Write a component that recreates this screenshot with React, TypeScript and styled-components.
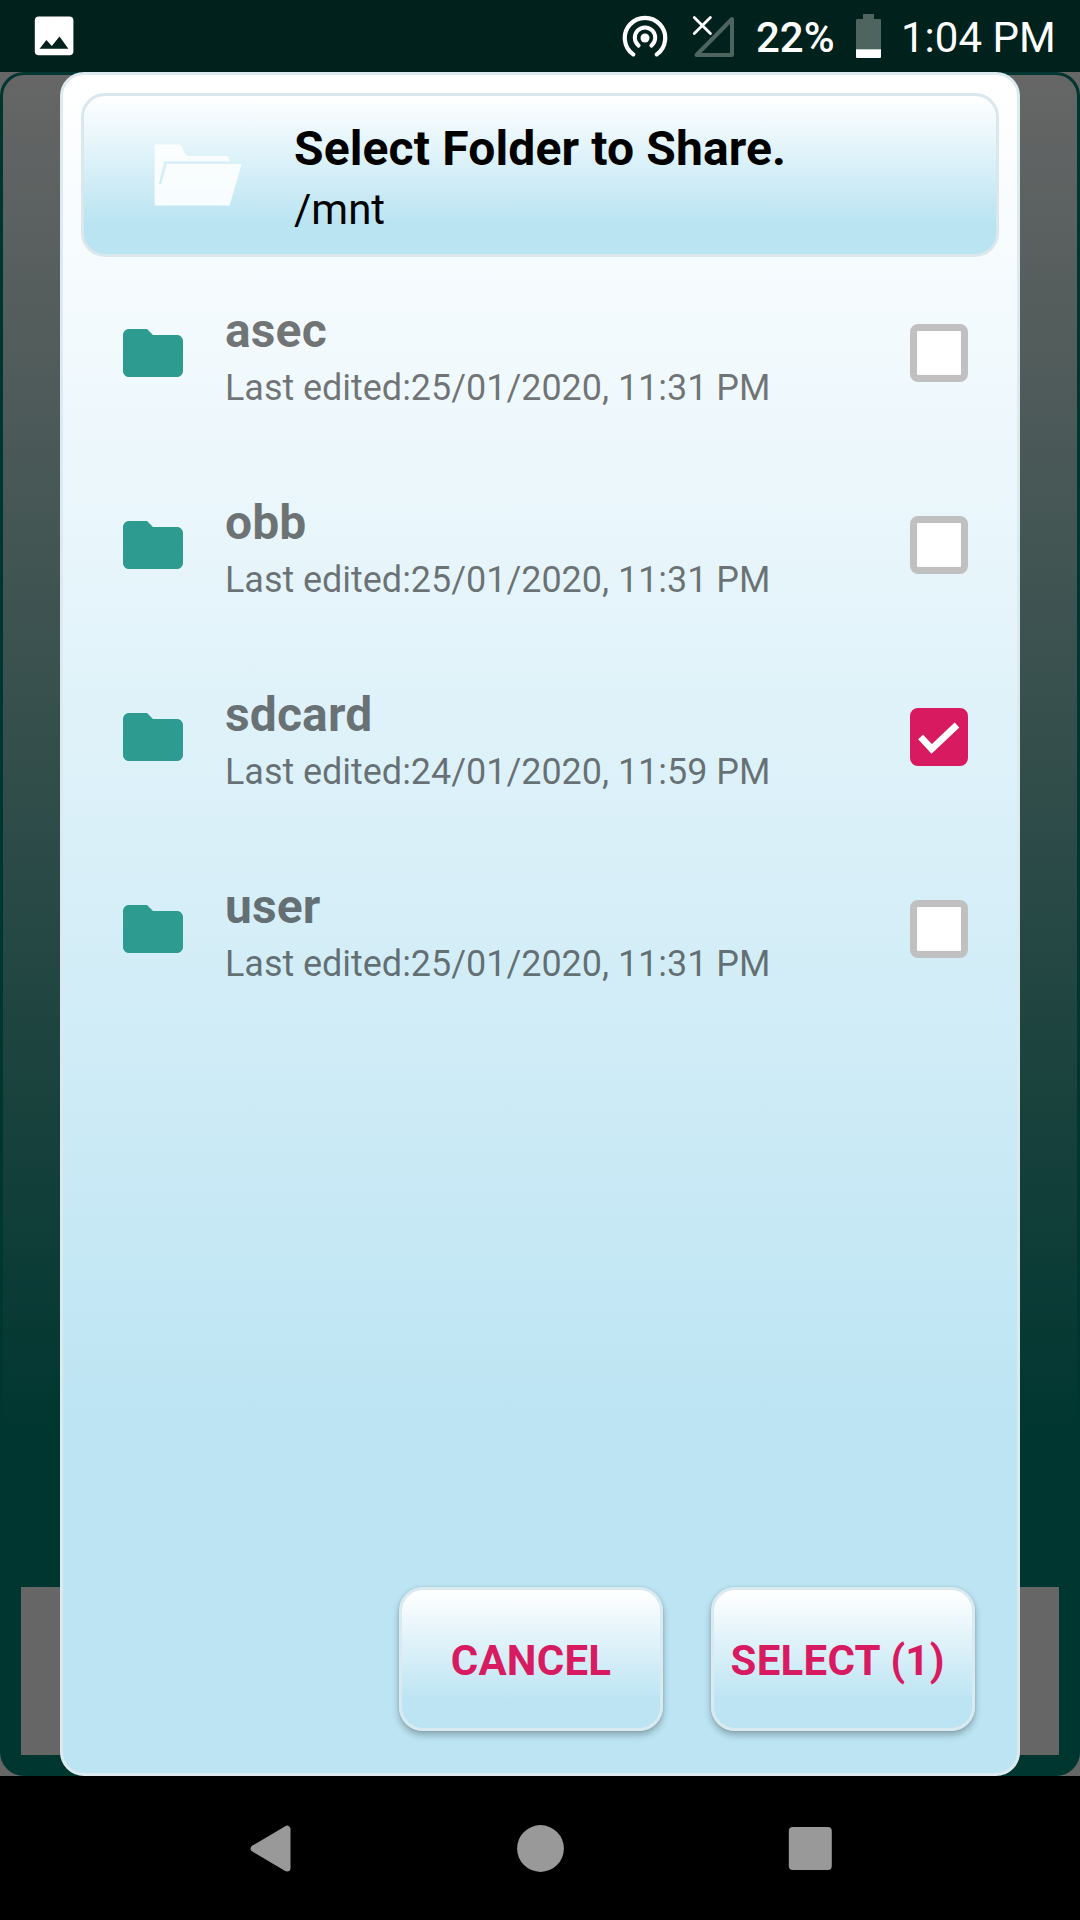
import React, { useState } from "react";
import styled, { createGlobalStyle } from "styled-components";

const GlobalStyle = createGlobalStyle`
  * { box-sizing: border-box; }
  body { margin: 0; background: #000; }
  button { font: inherit; }
`;

const Device = styled.div`
  width: 1080px;
  height: 1920px;
  display: flex;
  flex-direction: column;
  overflow: hidden;
  font-family: Roboto, "Noto Sans", sans-serif;
`;

const StatusBar = styled.header`
  height: 72px;
  flex: none;
  display: flex;
  align-items: center;
  padding: 0 24px 0 33px;
  background: #00211c;
  color: #fff;
  font-size: 42px;
  line-height: 72px;
  white-space: nowrap;

  svg { display: block; flex: none; }
`;

const StatusIcons = styled.div`
  margin-left: auto;
  display: flex;
  align-items: center;
`;

const Battery = styled.span`
  width: 77px;
  margin: 4px 23px 0 20px;
  font-weight: 500;
`;

const Clock = styled.span`
  width: 155px;
  margin: 4px 0 0 19px;
`;

const Stage = styled.main`
  height: 1704px;
  flex: none;
  display: grid;
  grid-template: 100% / 100%;
  background: #666;
`;

const Backdrop = styled.div`
  grid-area: 1 / 1;
  display: flex;
  flex-direction: column;
  justify-content: flex-end;
  padding: 18px;
  border: 3px solid #003630;
  border-radius: 24px;
  background: linear-gradient(#666 0%, #003630 80%);
`;

const BackdropFooter = styled.div`
  height: 168px;
  background: #666;
`;

const Dialog = styled.section`
  grid-area: 1 / 1;
  margin: 0 60px;
  padding: 18px;
  display: flex;
  flex-direction: column;
  border: 3px solid #dceaef;
  border-radius: 24px;
  background: linear-gradient(#fff 0%, #bce4f3 80%);
`;

const DialogHeader = styled.div`
  height: 164px;
  flex: none;
  display: flex;
  align-items: flex-start;
  border: 3px solid #dae8ee;
  border-radius: 24px;
  background: linear-gradient(#fff 0%, #bae4f2 80%);
  color: #000;

  svg { margin: 48px 52px 0 70px; flex: none; }
`;

const HeaderText = styled.div`
  padding-top: 25px;
`;

const Heading = styled.h1`
  margin: 0;
  font-size: 48px;
  line-height: 56px;
  font-weight: 700;
  letter-spacing: 0.13px;
`;

const Path = styled.div`
  margin-top: 8px;
  font-size: 42px;
  line-height: 49px;
`;

const List = styled.ul`
  flex: 1;
  margin: 0;
  padding: 0;
  list-style: none;
`;

const Row = styled.li`
  height: 192px;
  display: flex;
  align-items: center;
  padding: 0 31px 0 36px;
`;

const RowText = styled.div`
  flex: 1;
  margin: 0 0 0 36px;
  padding-top: 5px;
  color: rgba(0, 0, 0, 0.54);
`;

const Name = styled.div`
  font-size: 48px;
  line-height: 56px;
  font-weight: 700;
  letter-spacing: 0.13px;
`;

const Edited = styled.div`
  margin-top: 8px;
  font-size: 36px;
  line-height: 42px;
  letter-spacing: -0.04px;
`;

const Check = styled.button<{ $on: boolean }>`
  width: 58px;
  height: 58px;
  flex: none;
  display: grid;
  place-items: center;
  padding: 0;
  border: 7px solid ${(p) => (p.$on ? "#d81b60" : "#c0c0c0")};
  border-radius: 8px;
  background: ${(p) => (p.$on ? "#d81b60" : "#fff")};

  svg { display: block; overflow: visible; }
`;

const Actions = styled.footer`
  display: flex;
  justify-content: flex-end;
  gap: 48px;
  padding: 0 24px 24px 0;
`;

const ActionButton = styled.button`
  width: 264px;
  height: 144px;
  padding: 2px 0 0;
  border: 3px solid #d9eaf1;
  border-radius: 24px;
  background: linear-gradient(#fff 0%, #bce4f3 80%);
  box-shadow: 0 4px 7px rgba(0, 0, 0, 0.28), 0 0 3px rgba(0, 0, 0, 0.1);
  color: #d81b60;
  font-size: 42px;
  font-weight: 700;
  letter-spacing: 0.25px;
  white-space: pre;
`;

const NavBar = styled.nav`
  height: 144px;
  flex: none;
  display: flex;
  justify-content: center;
  align-items: center;
  gap: 224px;
  padding-left: 2px;
  background: #000;
`;

const GalleryIcon = () => (
  <svg width="42" height="42" viewBox="33 15 42 42">
    <rect x="34.8" y="16.6" width="38.6" height="38.6" rx="4" fill="#fff" />
    <path d="M39.6 48.8 L46.4 40 L51.8 46 L59.5 36.4 L68.4 48.8 Z" fill="#00211c" />
  </svg>
);

const HotspotIcon = () => (
  <svg width="46" height="46" viewBox="622 13 46 46" fill="none" stroke="#fff" strokeLinecap="round">
    <circle cx="645" cy="38" r="4.5" fill="#fff" stroke="none" />
    <path d="M638.6 45.6 A10.2 10.2 0 1 1 651.4 45.6" strokeWidth="4" />
    <path d="M633.2 54.4 A20.2 20.2 0 1 1 656.8 54.4" strokeWidth="4.2" />
  </svg>
);

const NoSignalIcon = () => (
  <svg width="44" height="46" viewBox="692 13 44 46" fill="none">
    <path d="M732 19 V55 H696.5 Z" stroke="#4d645f" strokeWidth="4" strokeLinejoin="round" />
    <path d="M694.3 17.6 L710.4 33.4 M710.4 17.6 L694.3 33.4" stroke="#fff" strokeWidth="2.8" strokeLinecap="round" />
  </svg>
);

const BatteryIcon = () => (
  <svg width="26" height="46" viewBox="856 13 26 46">
    <path d="M863 14 H874 V19 H880 Q881 19 881 20 V49.3 H856 V20 Q856 19 857 19 H863 Z" fill="#4d645f" />
    <path d="M856 49.3 H881 V57 Q881 58 880 58 H857 Q856 58 856 57 Z" fill="#fff" />
  </svg>
);

const OpenFolderIcon = () => (
  <svg width="88" height="62" viewBox="154 144 88 62">
    <path
      d="M154.6 144.6 H178 Q181.5 144.6 182.6 148.5 Q185 156 189 156 H226.5 Q229 156 229.6 161.2 H164 L159 184 H161 L167 164 H241.6 L229.6 205.4 H154.6 Z"
      fill="#fff"
      fillOpacity="0.86"
    />
  </svg>
);

const FolderIcon = () => (
  <svg width="72" height="72" viewBox="0 0 24 24">
    <path
      d="M10 4H4c-1.1 0-1.99.9-1.99 2L2 18c0 1.1.9 2 2 2h16c1.1 0 2-.9 2-2V8c0-1.1-.9-2-2-2h-8l-2-2z"
      fill="#2d9b90"
    />
  </svg>
);

const TickIcon = () => (
  <svg width="44" height="44" viewBox="917 715 44 44">
    <path d="M920.6 737 L931.7 748.9 L957 725" fill="none" stroke="#fff" strokeWidth="6.8" />
  </svg>
);

const BackIcon = () => (
  <svg width="42" height="48" viewBox="250 1824 42 48">
    <path
      d="M287 1829.2 V1868 L254.2 1848.6 Z"
      fill="#999"
      stroke="#999"
      strokeWidth="7"
      strokeLinejoin="round"
    />
  </svg>
);

const HomeIcon = () => (
  <svg width="48" height="48" viewBox="0 0 48 48">
    <circle cx="24.5" cy="24.5" r="23.4" fill="#999" />
  </svg>
);

const RecentsIcon = () => (
  <svg width="44" height="44" viewBox="0 0 44 44">
    <rect x="0.8" y="1" width="43" height="43" rx="4" fill="#999" />
  </svg>
);

const folders = [
  { name: "asec", edited: "25/01/2020, 11:31 PM" },
  { name: "obb", edited: "25/01/2020, 11:31 PM" },
  { name: "sdcard", edited: "24/01/2020, 11:59 PM" },
  { name: "user", edited: "25/01/2020, 11:31 PM" },
];

export default function App() {
  const [selected, setSelected] = useState<string[]>(["sdcard"]);
  const toggle = (name: string) =>
    setSelected((s) => (s.includes(name) ? s.filter((n) => n !== name) : [...s, name]));

  return (
    <Device>
      <GlobalStyle />
      <StatusBar>
        <GalleryIcon />
        <StatusIcons>
          <HotspotIcon />
          <svg width="24" height="1" />
          <NoSignalIcon />
          <Battery>22%</Battery>
          <BatteryIcon />
          <Clock>1:04 PM</Clock>
        </StatusIcons>
      </StatusBar>
      <Stage>
        <Backdrop>
          <BackdropFooter />
        </Backdrop>
        <Dialog>
          <DialogHeader>
            <OpenFolderIcon />
            <HeaderText>
              <Heading>Select Folder to Share.</Heading>
              <Path>/mnt</Path>
            </HeaderText>
          </DialogHeader>
          <List>
            {folders.map((f) => (
              <Row key={f.name}>
                <FolderIcon />
                <RowText>
                  <Name>{f.name}</Name>
                  <Edited>Last edited:{f.edited}</Edited>
                </RowText>
                <Check
                  $on={selected.includes(f.name)}
                  role="checkbox"
                  aria-checked={selected.includes(f.name)}
                  onClick={() => toggle(f.name)}
                >
                  {selected.includes(f.name) && <TickIcon />}
                </Check>
              </Row>
            ))}
          </List>
          <Actions>
            <ActionButton>CANCEL</ActionButton>
            <ActionButton>{`SELECT (${selected.length}) `}</ActionButton>
          </Actions>
        </Dialog>
      </Stage>
      <NavBar>
        <BackIcon />
        <HomeIcon />
        <RecentsIcon />
      </NavBar>
    </Device>
  );
}
